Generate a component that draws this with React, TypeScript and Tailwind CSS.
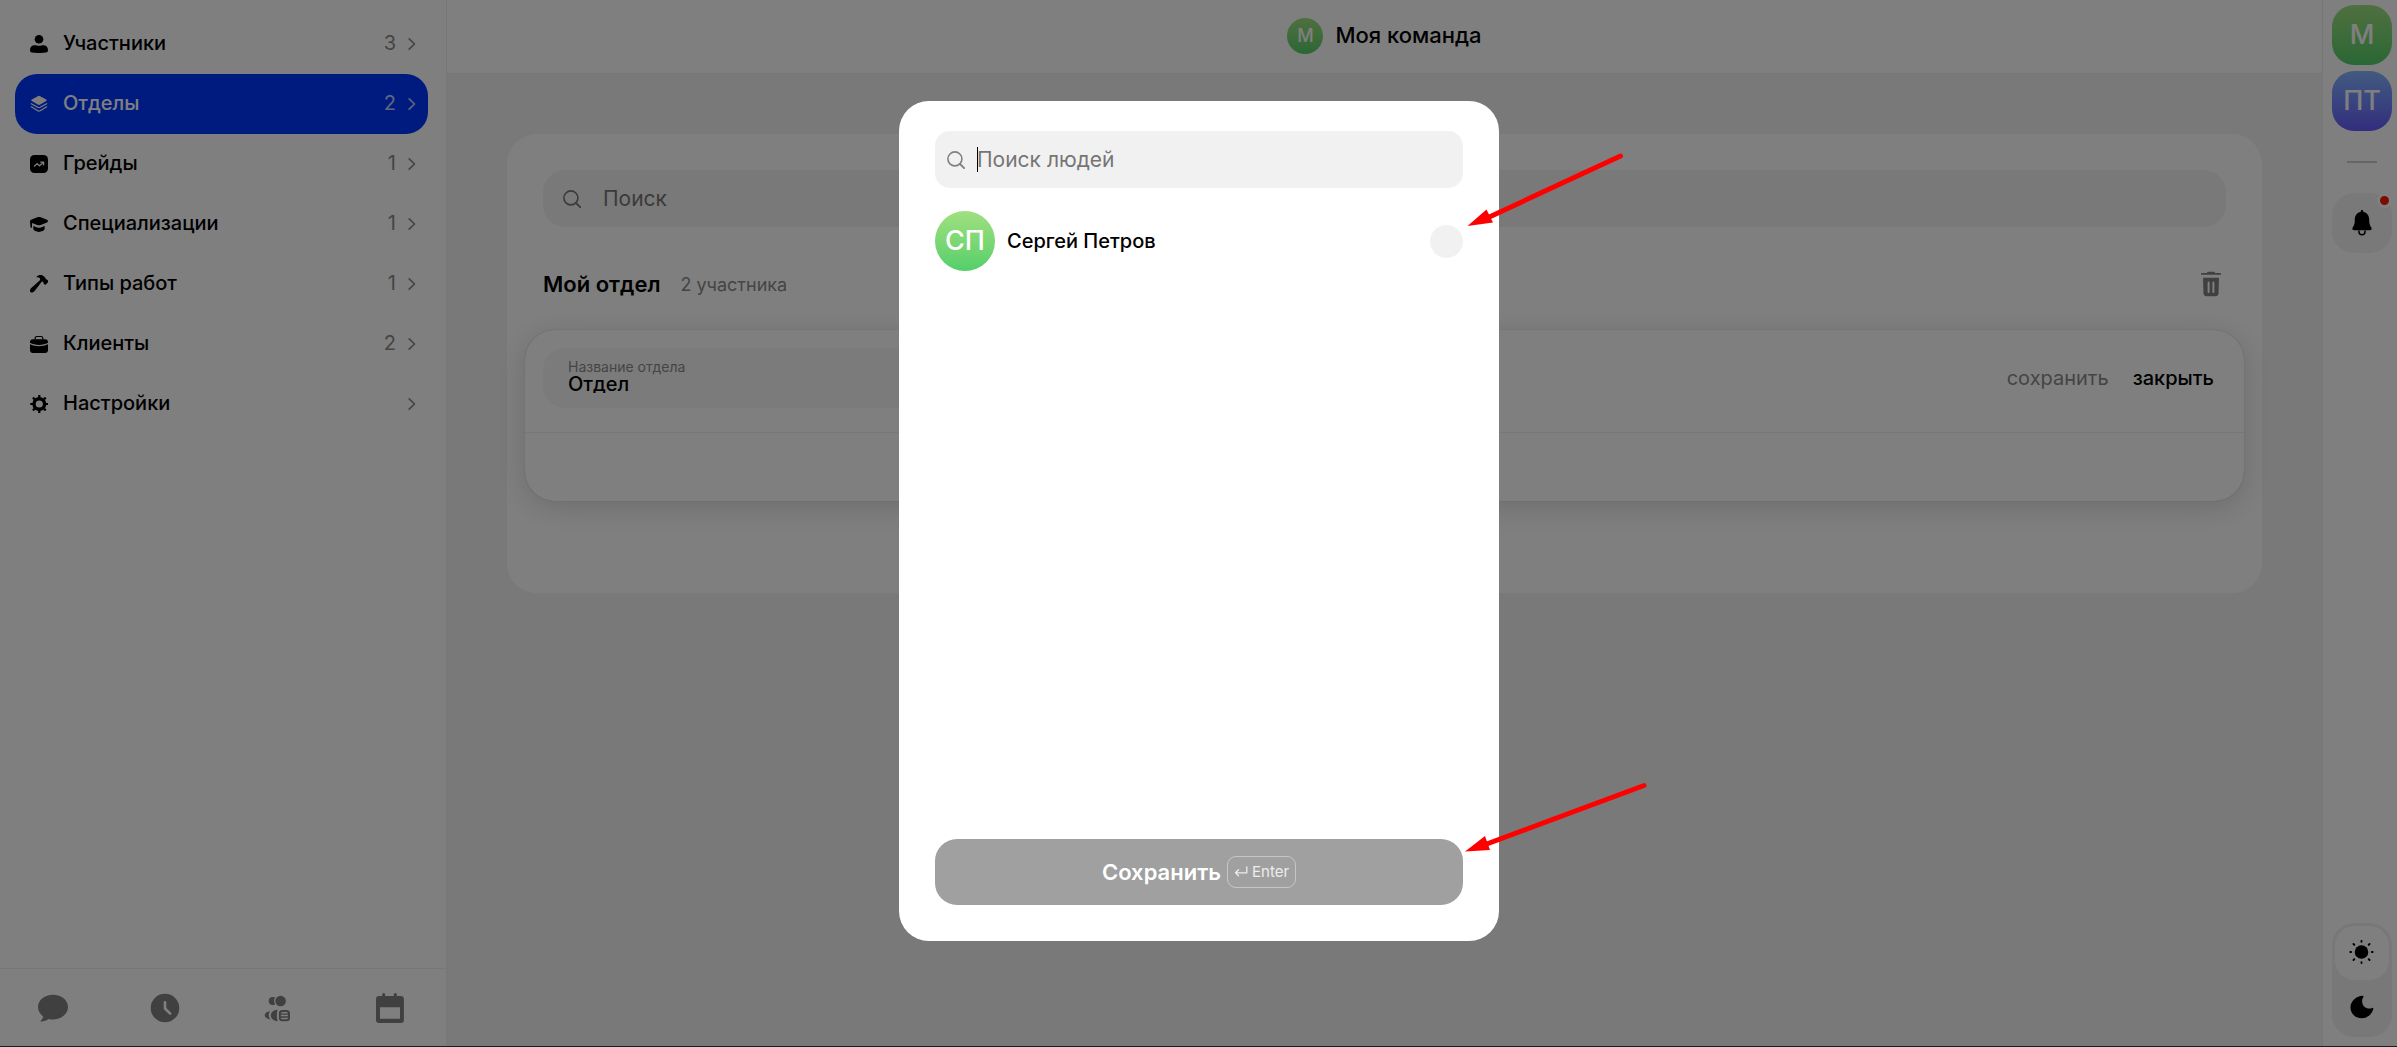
import { useState, type ReactNode } from 'react';
import { clsx } from 'clsx';

// ==========================================================================
// Types
// ==========================================================================

interface NavItem {
  label: string;
  icon: ReactNode;
  count?: number;
}

// ==========================================================================
// Icons
// ==========================================================================

function MenuIcon({ children }: { children: ReactNode }) {
  return (
    <svg viewBox="0 0 18 18" className="size-[18px] shrink-0" fill="currentColor" aria-hidden="true">
      {children}
    </svg>
  );
}

const PersonIcon = (
  <MenuIcon>
    <circle cx="9" cy="4.3" r="4.3" />
    <path d="M0 15.2C0 12 2 10.2 4.6 10.2c1.6 0 2.7.5 4.4.5s2.800-.5 4.400-.5C16 10.200 18 12 18 15.200c0 1.300-.5 2-2 2.300-4.500.7-9.500.7-14 0-1.500-.3-2-1-2-2.300z" />
  </MenuIcon>
);

const LayersIcon = (
  <MenuIcon>
    <path d="M9 .8c.5 0 .8.2 1.200.4l6 3.400c.7.4.7 1 0 1.400l-6 3.500c-.8.5-1.600.5-2.400 0L1.800 6c-.7-.4-.7-1 0-1.400l6-3.400C8.200 1 8.500.8 9 .8z" />
    <g fill="none" stroke="currentColor" strokeWidth="1.200" strokeLinecap="round" strokeLinejoin="round">
      <path d="M1.300 8.700l6.500 3.600c.8.400 1.600.4 2.400 0l6.500-3.600" />
      <path d="M1.300 11.800l6.500 3.900c.8.500 1.600.5 2.400 0l6.500-3.900" />
    </g>
  </MenuIcon>
);

const GradeIcon = (
  <MenuIcon>
    <rect width="18" height="18" rx="4.500" />
    <path
      d="M4.500 11l2.700-2.300 2.300 2 3.800-3.300M10.800 7.200h2.800v2.600"
      className="fill-none stroke-white"
      strokeWidth="1.300"
      strokeLinecap="round"
      strokeLinejoin="round"
    />
  </MenuIcon>
);

const CapIcon = (
  <MenuIcon>
    <path d="M9 2c.6 0 1.100.1 1.700.3l6.300 2.500c1.300.6 1.300 2 0 2.600l-6.300 2.500c-1.200.4-2.200.4-3.400 0L2 7.900v4.300c0 .8-1.500.8-1.500 0L0 6.600c0-.8.3-1.500 1-1.800l6.300-2.500C7.900 2.100 8.400 2 9 2z" />
    <path d="M3.300 11L7 12.400c1.400.5 2.600.5 4 0l3.700-1.400v2.600c0 2-3.200 3.300-5.700 3.300s-5.700-1.300-5.700-3.300z" />
  </MenuIcon>
);

const HammerIcon = (
  <MenuIcon>
    <path d="M6.200 1.900C8.900-.4 11.900-.4 14 1.400l1.300 1.400c.3.700.2 1 .6 1.400.5.4.9.2 1.400.6l1 1c.5.4.5.8 0 1.200l-2.400 2.400c-.5.5-.9.5-1.300 0l-.9-1c-.4-.5-.1-.9-.6-1.400l-1-.8-7.300 9.600c-1.400 1.800-3.300 2.300-4.300 1.300s-.7-2.700.7-4l9-8.100-.5-2c-.7-.7-1.400-.7-2.500-.6-.6 0-.7-.3-.2-.7z" />
  </MenuIcon>
);

const BriefcaseIcon = (
  <MenuIcon>
    <path d="M5.200 4.500V3.200c0-1 .7-1.700 1.700-1.700h4.200c1 0 1.700.7 1.700 1.700v1.300" fill="none" stroke="currentColor" strokeWidth="1.200" />
    <path d="M3 4.200h12c2 0 3 1.100 3 3v.6c-5 2.800-13 2.800-18 0v-.6c0-1.900 1-3 3-3z" />
    <path d="M0 9.300c5 2.500 13 2.500 18 0V15c0 2-1 3-3 3H3c-2 0-3-1-3-3z" />
  </MenuIcon>
);

const GearIcon = (
  <MenuIcon>
    <circle cx="9.300" cy="9" r="5.300" fill="none" stroke="currentColor" strokeWidth="3.400" />
    <path
      d="M9.300 0v3M9.300 15v3M.3 9h3M15.300 9h3M2.900 2.600l2.200 2.200M13.500 13.200l2.200 2.200M2.900 15.400l2.200-2.200M13.500 4.800l2.200-2.200"
      stroke="currentColor"
      strokeWidth="2.200"
    />
  </MenuIcon>
);

function SearchIcon() {
  return (
    <svg viewBox="0 0 18 18" className="size-[18px] shrink-0" fill="none" stroke="currentColor" aria-hidden="true">
      <circle cx="7.900" cy="7.900" r="7" strokeWidth="1.600" />
      <path d="M13 13l4.200 4.200" strokeWidth="1.800" strokeLinecap="round" />
    </svg>
  );
}

function Chevron() {
  return (
    <svg viewBox="0 0 8 14" className="h-[14px] w-2" fill="none" stroke="currentColor" aria-hidden="true">
      <path d="M1.200 1.800L6.500 7l-5.300 5.200" strokeWidth="1.700" strokeLinecap="round" strokeLinejoin="round" />
    </svg>
  );
}

// ==========================================================================
// Data
// ==========================================================================

const NAV_ITEMS: NavItem[] = [
  { label: 'Участники', icon: PersonIcon, count: 3 },
  { label: 'Отделы', icon: LayersIcon, count: 2 },
  { label: 'Грейды', icon: GradeIcon, count: 1 },
  { label: 'Специализации', icon: CapIcon, count: 1 },
  { label: 'Типы работ', icon: HammerIcon, count: 1 },
  { label: 'Клиенты', icon: BriefcaseIcon, count: 2 },
  { label: 'Настройки', icon: GearIcon },
];

// ==========================================================================
// Sidebar
// ==========================================================================

function Sidebar() {
  const active = 'Отделы';

  return (
    <aside className="flex w-[447px] shrink-0 flex-col border-r border-[#eeeeee] bg-white">
      <nav className="flex-1 pt-[14px] pr-[18px] pl-[15px]">
        {NAV_ITEMS.map((item) => (
          <a
            key={item.label}
            href="#"
            className={clsx(
              'flex h-[60px] items-center rounded-[22px] pr-3 pl-[15px] text-[20px]',
              item.label === active ? 'bg-[#0037ff] font-medium text-white' : 'font-[450] text-black'
            )}
          >
            {item.icon}
            <span className="ml-[15px] flex-1 pb-[2px]">{item.label}</span>
            <span
              className={clsx(
                'flex items-center gap-3 font-normal',
                item.label === active ? 'text-white/75' : 'text-[#8a8a8a]'
              )}
            >
              <span className="pb-[2px]">{item.count}</span>
              <Chevron />
            </span>
          </a>
        ))}
      </nav>

      <div className="flex h-[78px] items-center justify-between border-t border-[#eeeeee] pr-[41px] pl-[38px] text-[#808080]">
        <button type="button" aria-label="Чаты">
          <svg viewBox="0 0 30 30" className="size-[30px]" fill="currentColor">
            <path d="M15 1.800c8.300 0 15 5.300 15 12.200S23.300 26.500 15 26.500c-1.500 0-3-.2-4.400-.6-2 1.600-4.500 2.400-7.500 2.500-.7 0-.8-.6-.3-1 1.500-1.300 2.200-2.600 2.400-4C2 21 0 17.700 0 14 0 7.100 6.700 1.800 15 1.800z" />
          </svg>
        </button>
        <button type="button" aria-label="Время">
          <svg viewBox="0 0 30 30" className="size-[30px]">
            <circle cx="15" cy="15" r="14.300" fill="currentColor" />
            <path d="M15 9.200v6.300l5.200 5.200" fill="none" stroke="white" strokeWidth="2.600" strokeLinecap="round" strokeLinejoin="round" />
          </svg>
        </button>
        <button type="button" aria-label="Команда">
          <svg viewBox="0 0 30 30" className="size-[30px]" fill="currentColor">
            <circle cx="9.800" cy="8" r="4.100" />
            <circle cx="17.600" cy="8" r="6.500" fill="white" />
            <circle cx="17.600" cy="8" r="5.300" />
            <path d="M7.200 18C4 18.600 1.700 20.200 1.700 22.200s2.300 3.600 5.500 4.200c-1.900-2.500-1.900-5.900 0-8.400z" />
            <path d="M14.600 16.800c-3.900.2-6.800 2.400-6.800 5.600s2.900 5.500 6.800 5.900c-1-3.400-1-8.100 0-11.500z" />
            <rect x="16.900" y="17.900" width="9.100" height="9.300" rx="2.500" fill="none" stroke="currentColor" strokeWidth="2" />
            <path d="M18 21.200h7M18 24h7" stroke="currentColor" strokeWidth="1.300" />
          </svg>
        </button>
        <button type="button" aria-label="Календарь">
          <svg viewBox="0 0 30 30" className="size-[30px]" fill="currentColor">
            <path
              fillRule="evenodd"
              d="M7.200 3V1.500a1.500 1.500 0 0 1 3 0V3h8.600V1.500a1.500 1.500 0 0 1 3 0V3h4.100c2 0 3 1 3 3v21c0 2-1 3-3 3H4c-2 0-3-1-3-3V6c0-2 1-3 3-3zM5 14.300v11.500h20V14.300z"
            />
          </svg>
        </button>
      </div>
    </aside>
  );
}

// ==========================================================================
// Department page
// ==========================================================================

function DepartmentPage() {
  const [name, setName] = useState('Отдел');

  return (
    <main className="flex min-w-0 flex-1 flex-col bg-[#f3f3f3]">
      <header className="flex h-[74px] items-center justify-center gap-3 border-b border-[#ededed] bg-white pb-[2px]">
        <span className="flex size-9 items-center justify-center rounded-full bg-linear-to-b from-[#9fe080] to-[#52cf6a] text-[18px] font-medium text-white">
          M
        </span>
        <h1 className="text-[22px] font-medium text-black">Моя команда</h1>
      </header>

      <section className="mx-[60px] mt-[60px] flex flex-col rounded-[30px] bg-white px-[18px] pt-9 pb-[92px]">
        <label className="mx-[18px] flex h-[57px] items-center gap-[22px] rounded-[22px] bg-[#f3f3f3] px-5 text-[#757575]">
          <SearchIcon />
          <input
            type="text"
            aria-label="Поиск"
            placeholder="Поиск"
            className="min-w-0 flex-1 bg-transparent text-[21px] placeholder:text-[#757575] focus:outline-none"
          />
        </label>

        <div className="mx-[18px] mt-[39px] flex h-9 items-center">
          <h2 className="text-[22px] font-semibold text-black">Мой отдел</h2>
          <span className="ml-5 flex-1 text-[18px] text-[#8a8a8a]">2 участника</span>
          <button type="button" aria-label="Удалить отдел" className="mr-[5px] text-[#808080]">
            <svg viewBox="0 0 20 26" className="h-[26px] w-5">
              <path d="M.8 2.900h18.400M7 1.600h6" fill="none" stroke="currentColor" strokeWidth="1.800" strokeLinecap="round" />
              <path d="M2 6.800h16l-.5 15.400c-.1 2-1.200 3-3.200 3H5.700c-2 0-3.100-1-3.200-3z" fill="currentColor" />
              <path d="M7.600 11.500v9.500M12.400 11.500v9.500" stroke="white" strokeWidth="2" strokeLinecap="round" />
            </svg>
          </button>
        </div>

        <div className="mt-7 rounded-[30px] bg-white shadow-[0_0_1px_rgba(0,0,0,0.3),0_6px_30px_rgba(0,0,0,0.15)]">
          <div className="flex items-center justify-between border-b border-[#f0f0f0] pt-[18px] pr-[30px] pb-6 pl-[18px]">
            <label className="flex h-[60px] w-1/2 flex-col justify-center rounded-[22px] bg-[#f7f7f7] px-[25px] pb-1">
              <span className="text-[14px] leading-4 text-[#8a8a8a]">Название отдела</span>
              <input
                type="text"
                value={name}
                onChange={(e) => setName(e.target.value)}
                className="h-[18px] bg-transparent text-[20px] leading-[18px] font-[450] text-black focus:outline-none"
              />
            </label>
            <div className="flex gap-6 text-[20px]">
              <button type="button" className="text-[#8a8a8a]">
                сохранить
              </button>
              <button type="button" className="font-[450] text-black">
                закрыть
              </button>
            </div>
          </div>
          <div className="h-[68px]" />
        </div>
      </section>
    </main>
  );
}

// ==========================================================================
// Right rail
// ==========================================================================

function TeamRail() {
  return (
    <aside className="flex w-[75px] shrink-0 flex-col border-l border-[#eeeeee] bg-white pt-[5px] pr-[5px] pb-[9px] pl-[9px]">
      <button
        type="button"
        className="h-[60px] rounded-[22px] bg-linear-to-b from-[#9fe080] to-[#52cf6a] text-[27px] font-medium text-white"
      >
        М
      </button>
      <button
        type="button"
        className="mt-[6px] h-[60px] rounded-[22px] bg-linear-to-b from-[#86b4ff] to-[#6659fb] text-[27px] font-medium text-white"
      >
        ПТ
      </button>
      <hr className="mx-auto mt-[30px] w-[30px] border-t-2 border-[#cccccc]" />
      <button
        type="button"
        aria-label="Уведомления"
        className="relative mt-[30px] flex h-[60px] items-center justify-center rounded-[22px] bg-[#f3f3f3] text-black"
      >
        <svg viewBox="0 0 20 26" className="h-[26px] w-5" fill="currentColor">
          <path d="M10 0c.8 0 1.300.6 1.300 1.500v.4c3.600.6 5.900 3.500 5.900 7.300 0 5 .8 6.300 2.100 8.300.9 1.500.2 2.700-1.500 2.700H2.200c-1.700 0-2.400-1.200-1.500-2.700 1.300-2 2.100-3.300 2.100-8.300 0-3.800 2.300-6.700 5.900-7.300v-.4C8.700.6 9.200 0 10 0z" />
          <path d="M7 20.500v1.300a3 3 0 0 0 6 0v-1.300" fill="none" stroke="currentColor" strokeWidth="1.500" />
        </svg>
        <span className="absolute top-0 right-0 size-[15px] rounded-full border-3 border-white bg-[#f51800]" />
      </button>

      <div className="mt-auto flex flex-col rounded-[22px] bg-[#f0f0f0] p-[3px] text-black">
        <button
          type="button"
          aria-label="Светлая тема"
          className="flex h-[54px] items-center justify-center rounded-[20px] bg-white"
        >
          <svg viewBox="0 0 26 26" className="size-[26px]">
            <circle cx="12.500" cy="12" r="6.800" fill="currentColor" />
            <path
              d="M12.500 .9v.8M12.500 22.300v.8M1.300 12h.9M22.800 12h.9M4.500 4l.8.800M19.700 19.200l.8.800M4.500 20l.8-.8M19.700 4.800l.8-.8"
              stroke="currentColor"
              strokeWidth="1.900"
              strokeLinecap="round"
            />
          </svg>
        </button>
        <button type="button" aria-label="Темная тема" className="flex h-[54px] items-center justify-center">
          <svg viewBox="0 0 24 24" className="size-6" fill="currentColor">
            <path d="M12.800.8c.7-.1 1 .4.6 1-2.200 4-1.300 7.600.8 9.600 2.100 2.100 5 2.700 8.200 1.500.7-.3 1.100.1.900.9-1.300 5.700-6 9.400-11.700 9.400C5 23.200.5 18.500.5 12.300.5 6.200 6.500 1 12.800.8z" />
          </svg>
        </button>
      </div>
    </aside>
  );
}

// ==========================================================================
// People picker
// ==========================================================================

function PeopleDialog() {
  return (
    <div className="fixed inset-0 flex items-center justify-center bg-black/50 pb-[5px] pl-px">
      <div
        role="dialog"
        aria-modal="true"
        aria-label="Выбор участников"
        className="relative flex h-[840px] w-[600px] flex-col rounded-[30px] bg-white px-9 pt-[30px] pb-9"
      >
        <label className="flex h-[57px] items-center rounded-[15px] bg-[#f1f1f1] px-3 text-[#808080]">
          <SearchIcon />
          <span className="ml-3 h-[25px] w-px bg-black" />
          <input
            type="text"
            aria-label="Поиск людей"
            placeholder="Поиск людей"
            className="-ml-px min-w-0 flex-1 bg-transparent text-[21px] placeholder:text-[#757575] focus:outline-none"
          />
        </label>

        <ul className="mt-[23px] flex-1">
          <li>
            <label className="flex items-center gap-3">
              <span className="flex size-[60px] items-center justify-center rounded-full bg-linear-to-b from-[#9fe080] to-[#52cf6a] text-[27px] font-medium text-white">
                СП
              </span>
              <span className="flex-1 text-[20px] font-[450] text-black">Сергей Петров</span>
              <input
                type="checkbox"
                className="size-[33px] appearance-none rounded-full bg-[#f1f1f1] checked:bg-[#0037ff]"
              />
            </label>
          </li>
        </ul>

        <button
          type="button"
          className="flex h-[66px] items-center justify-center gap-[6px] rounded-[22px] bg-[#a0a0a0] text-white"
        >
          <span className="text-[22px] font-semibold">Сохранить</span>
          <kbd className="flex h-8 items-center gap-1 rounded-[9px] border border-white/40 px-[6px] font-[Inter,sans-serif] text-[15px] text-white/80">
            <svg viewBox="0 0 14 12" className="h-3 w-[14px]" fill="none" stroke="currentColor" strokeWidth="1.300">
              <path d="M12.800 1v5.800H1.500M4.500 3.800l-3 3 3 3" strokeLinecap="round" strokeLinejoin="round" />
            </svg>
            Enter
          </kbd>
        </button>

        {/* Pointers to the checkbox and the save button */}
        <svg viewBox="0 0 160 80" className="absolute top-[50px] left-[566px] h-20 w-40 text-[#ff0000]" aria-hidden="true">
          <path d="M155.500 5L20 68" stroke="currentColor" strokeWidth="5" strokeLinecap="round" />
          <path d="M2.500 75l19-16.500 6.500 13z" fill="currentColor" />
        </svg>
        <svg viewBox="0 0 190 80" className="absolute top-[680px] left-[565px] h-20 w-[190px] text-[#ff0000]" aria-hidden="true">
          <path d="M180 4.500L20 64" stroke="currentColor" strokeWidth="5" strokeLinecap="round" />
          <path d="M1 70.500l20-15.500 5 14z" fill="currentColor" />
        </svg>
      </div>
    </div>
  );
}

// ==========================================================================
// App
// ==========================================================================

export default function App() {
  return (
    <div className="flex min-h-screen border-b border-[#2a403c] font-[Inter,sans-serif]">
      <Sidebar />
      <DepartmentPage />
      <TeamRail />
      <PeopleDialog />
    </div>
  );
}
